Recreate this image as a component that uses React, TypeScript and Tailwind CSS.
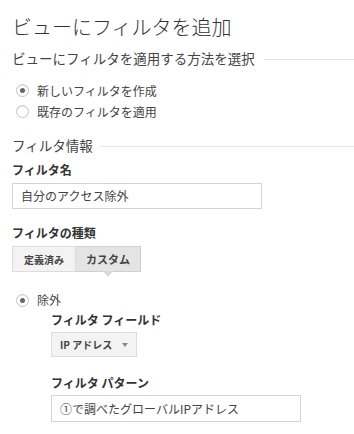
import React from "react";

const font = { fontFamily: '"Noto Sans CJK JP", "Liberation Sans", sans-serif' };

function Radio({ checked }: { checked: boolean }) {
  return (
    <span className="flex h-[13px] w-[13px] items-center justify-center rounded-full border border-[#c4c4c4] bg-white shadow-[inset_0_1px_1px_rgba(0,0,0,0.08)]">
      {checked && <span className="h-[5px] w-[5px] rounded-full bg-[#666]" />}
    </span>
  );
}

export default function App() {
  return (
    <div className="h-[434px] w-[354px] overflow-hidden bg-white pl-3 text-[#444]" style={font}>
      <div className="pt-[13px] text-[20px] leading-[28px] font-light text-[#333]">ビューにフィルタを追加</div>
      <div className="mt-[7px] flex items-center">
        <span className="text-[13.5px] leading-[20px] text-[#444]">ビューにフィルタを適用する方法を選択</span>
        <span className="ml-[9px] mt-[3px] h-px flex-1 bg-[#e5e5e5]" />
      </div>
      <div className="mt-[12px] flex h-[21px] items-center gap-[8px] pl-[4px]">
        <Radio checked />
        <span className="text-[12px] leading-[21px]">新しいフィルタを作成</span>
      </div>
      <div className="flex h-[21px] items-center gap-[8px] pl-[4px]">
        <Radio checked={false} />
        <span className="text-[12px] leading-[21px]">既存のフィルタを適用</span>
      </div>
      <div className="mt-[13px] flex items-center">
        <span className="text-[13.5px] leading-[20px] text-[#444]">フィルタ情報</span>
        <span className="ml-2 mt-[3px] h-px flex-1 bg-[#e5e5e5]" />
      </div>
      <div className="mt-[6px] text-[12px] font-bold leading-[18px] text-[#333]">フィルタ名</div>
      <div className="mt-[4px] flex h-[26px] w-[250px] items-center border border-[#d4d4d4] pl-[8px] text-[12px]">自分のアクセス除外</div>
      <div className="mt-[15px] text-[12px] font-bold leading-[18px] text-[#333]">フィルタの種類</div>
      <div className="relative mt-[4px] flex h-[26px]">
        <div className="flex w-[64px] items-center justify-center border border-[#dcdcdc] bg-[#f3f3f3] text-[10px] font-bold text-[#444]">定義済み</div>
        <div className="relative flex w-[65px] items-center justify-center border border-l-0 border-[#d0d0d0] bg-[#e4e4e4] text-[11px] font-bold text-[#444]">
          カスタム
          <span className="absolute left-1/2 top-full -ml-[5px] h-0 w-0 border-x-[5px] border-t-[6px] border-x-transparent border-t-[#d8d8d8]" />
        </div>
      </div>
      <div className="mt-[18px] flex h-[20px] items-center gap-[8px] pl-[4px]">
        <Radio checked />
        <span className="text-[12px] leading-[20px]">除外</span>
      </div>
      <div className="pl-[39px]">
        <div className="mt-[1px] text-[12px] font-bold leading-[18px] text-[#333]">フィルタ フィールド</div>
        <div className="mt-[3px] flex h-[25px] w-[86px] items-center border border-[#dcdcdc] bg-[#f3f3f3] pl-[8px] text-[10px] font-bold text-[#444]">
          IP アドレス
          <span className="ml-auto mr-[8px] h-0 w-0 border-x-[3px] border-t-[4px] border-x-transparent border-t-[#888]" />
        </div>
        <div className="mt-[17px] text-[12px] font-bold leading-[18px] text-[#333]">フィルタ パターン</div>
        <div className="mt-[3px] flex h-[27px] w-[250px] items-center border border-[#d4d4d4] pl-[8px] text-[12px]">①で調べたグローバルIPアドレス</div>
      </div>
    </div>
  );
}
